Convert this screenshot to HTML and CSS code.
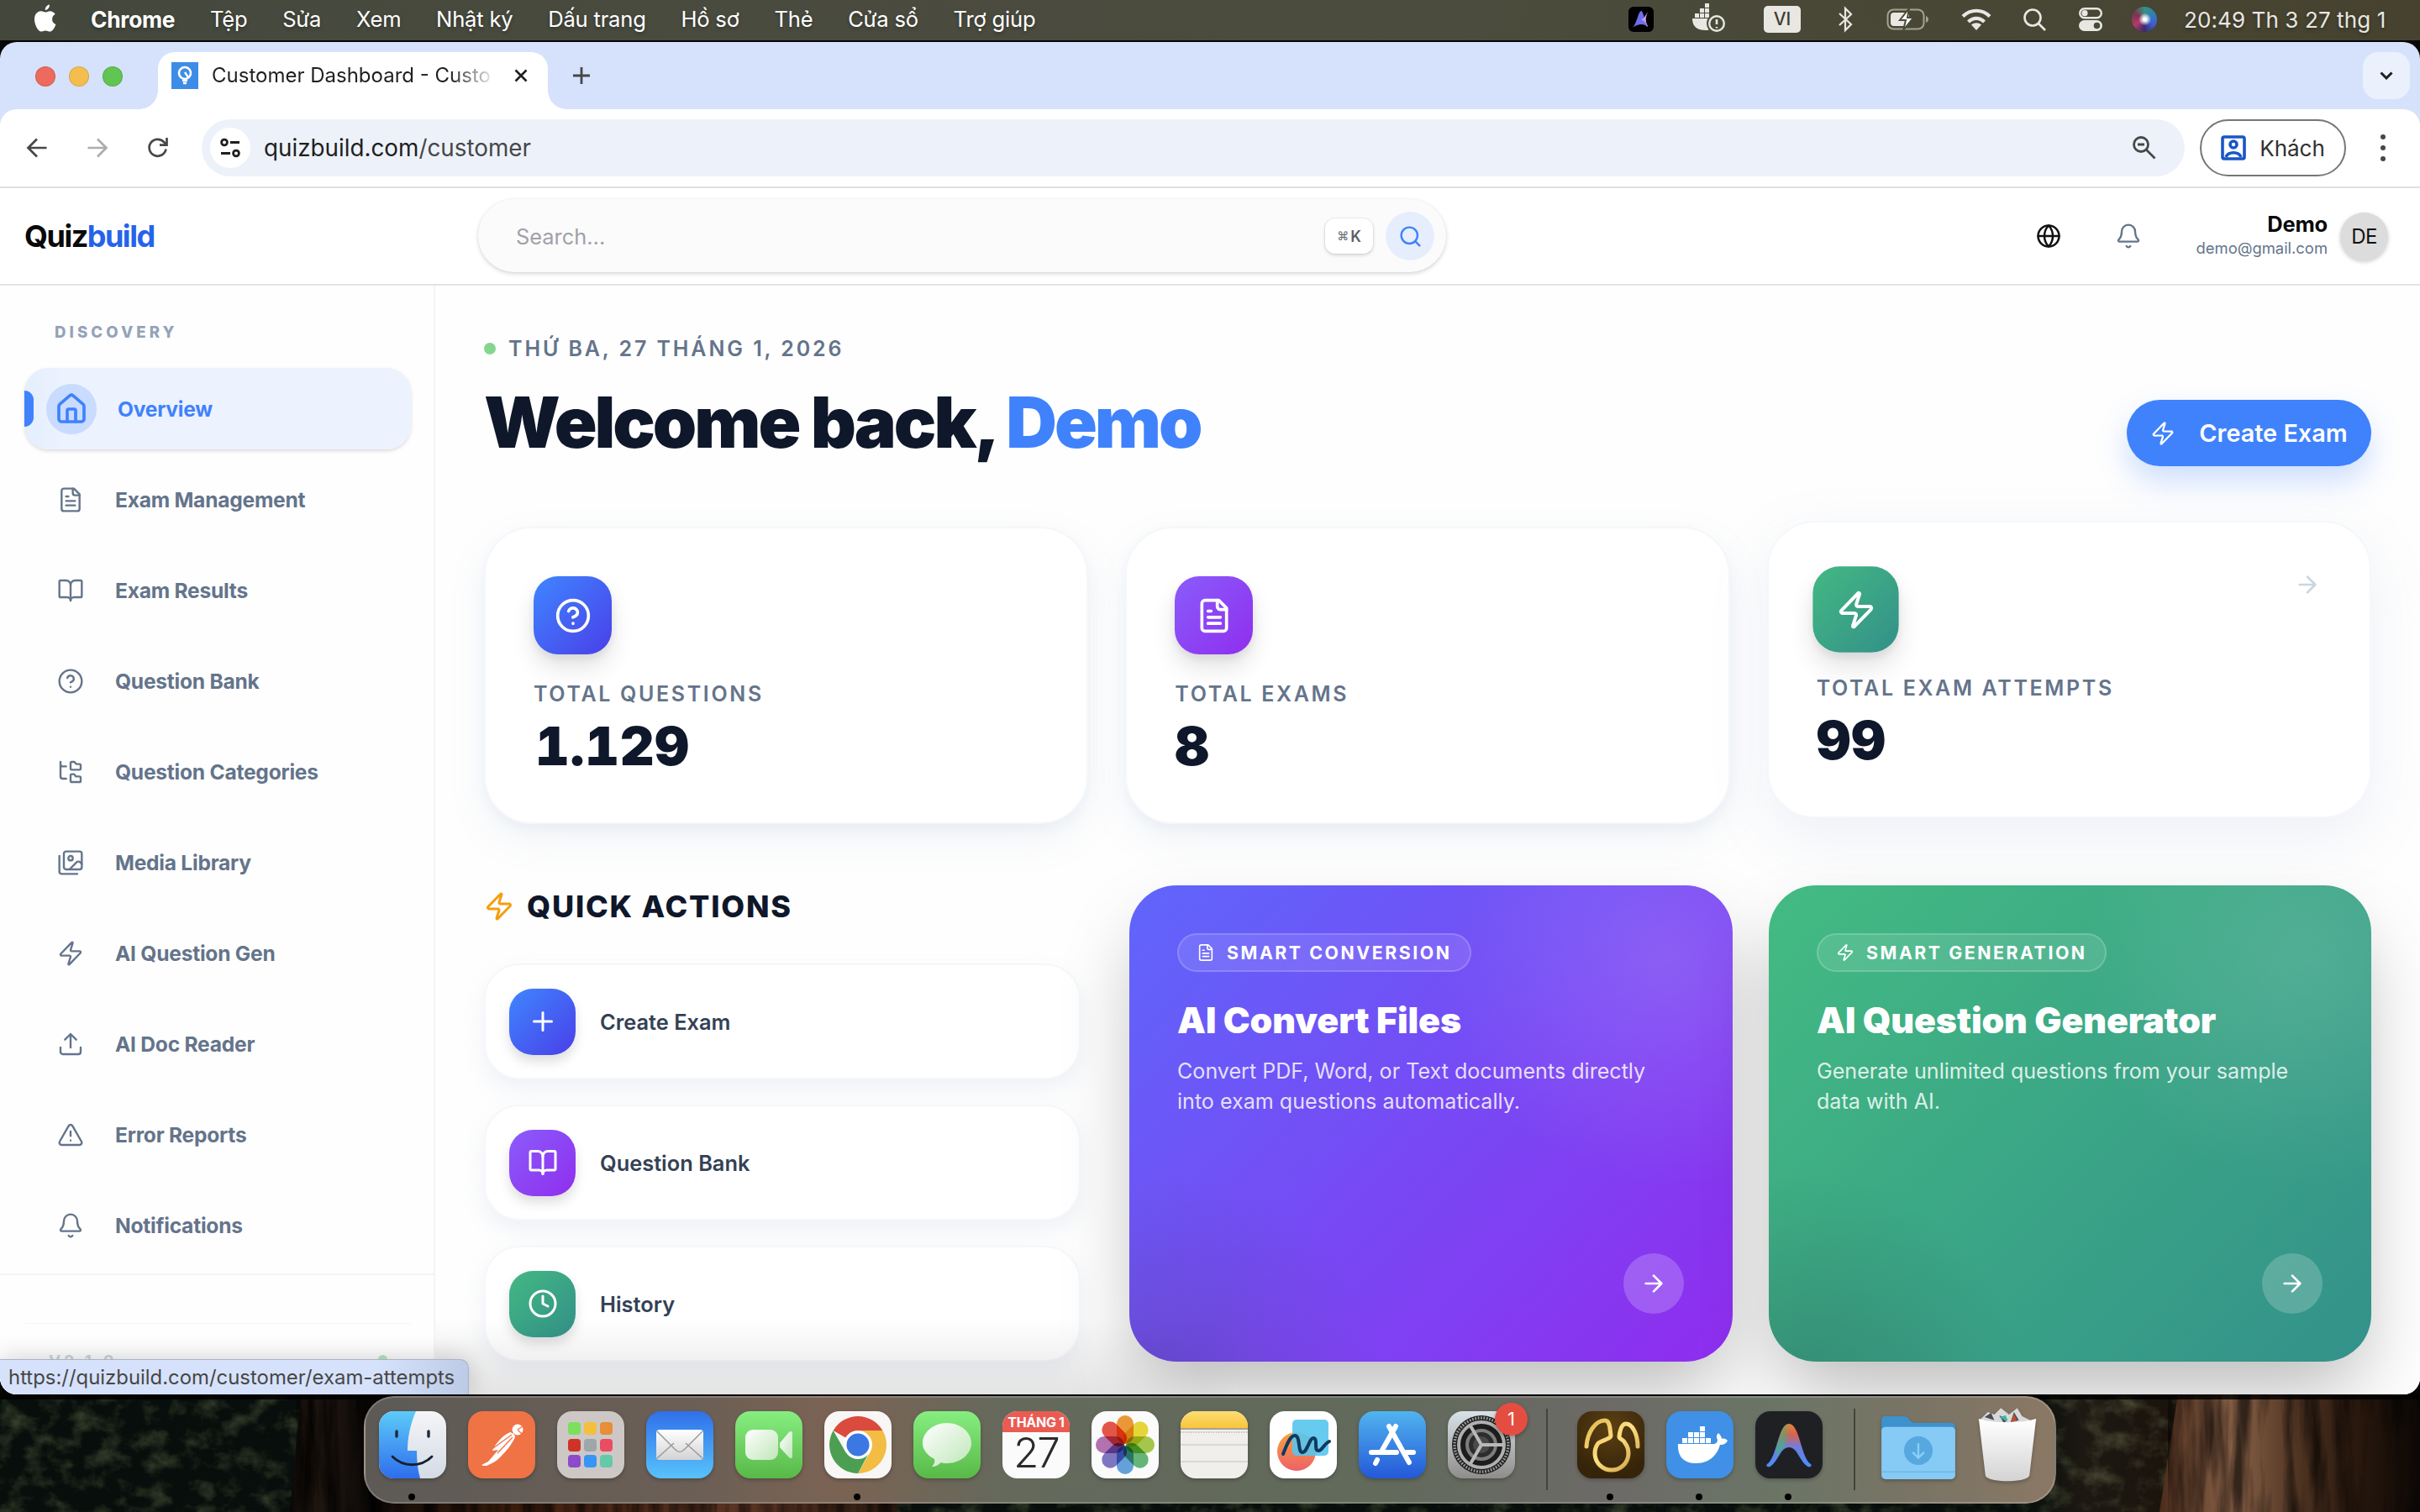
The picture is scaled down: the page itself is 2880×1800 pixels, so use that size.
FILE: index.html
```html
<!DOCTYPE html>
<html lang="vi">
<head>
<meta charset="utf-8">
<title>Customer Dashboard</title>
<link rel="stylesheet" href="styles.css">
</head>
<body>
<svg class="defs" width="0" height="0">
  <defs>
    <symbol id="house" viewBox="0 0 24 24"><path d="M15 21v-8a1 1 0 0 0-1-1h-4a1 1 0 0 0-1 1v8"/><path d="M3 10a2 2 0 0 1 .709-1.528l7-5.999a2 2 0 0 1 2.582 0l7 5.999A2 2 0 0 1 21 10v9a2 2 0 0 1-2 2H5a2 2 0 0 1-2-2z"/></symbol>
    <symbol id="file" viewBox="0 0 24 24"><path d="M15 2H6a2 2 0 0 0-2 2v16a2 2 0 0 0 2 2h12a2 2 0 0 0 2-2V7Z"/><path d="M14 2v4a2 2 0 0 0 2 2h4M10 9H8M16 13H8M16 17H8"/></symbol>
    <symbol id="book" viewBox="0 0 24 24"><path d="M12 7v14"/><path d="M3 18a1 1 0 0 1-1-1V4a1 1 0 0 1 1-1h5a4 4 0 0 1 4 4 4 4 0 0 1 4-4h5a1 1 0 0 1 1 1v13a1 1 0 0 1-1 1h-6a3 3 0 0 0-3 3 3 3 0 0 0-3-3z"/></symbol>
    <symbol id="help" viewBox="0 0 24 24"><circle cx="12" cy="12" r="10"/><path d="M9.09 9a3 3 0 0 1 5.83 1c0 2-3 3-3 3M12 17h.01"/></symbol>
    <symbol id="tree" viewBox="0 0 24 24"><path d="M20 10a1 1 0 0 0 1-1V6a1 1 0 0 0-1-1h-2.5a1 1 0 0 1-.8-.4l-.9-1.2A1 1 0 0 0 15 3h-2a1 1 0 0 0-1 1v5a1 1 0 0 0 1 1Z"/><path d="M20 21a1 1 0 0 0 1-1v-3a1 1 0 0 0-1-1h-2.9a1 1 0 0 1-.88-.55l-.42-.85a1 1 0 0 0-.92-.6H13a1 1 0 0 0-1 1v5a1 1 0 0 0 1 1Z"/><path d="M3 5a2 2 0 0 0 2 2h3M3 3v13a2 2 0 0 0 2 2h3"/></symbol>
    <symbol id="images" viewBox="0 0 24 24"><path d="M18 22H4a2 2 0 0 1-2-2V6"/><path d="m22 13-1.296-1.296a2.41 2.41 0 0 0-3.408 0L11 18"/><circle cx="12" cy="8" r="2"/><rect width="16" height="16" x="6" y="2" rx="2"/></symbol>
    <symbol id="zap" viewBox="0 0 24 24"><path d="M4 14a1 1 0 0 1-.78-1.63l9.9-10.2a.5.5 0 0 1 .86.46l-1.92 6.02A1 1 0 0 0 13 10h7a1 1 0 0 1 .78 1.63l-9.9 10.2a.5.5 0 0 1-.86-.46l1.92-6.02A1 1 0 0 0 11 14z"/></symbol>
    <symbol id="upload" viewBox="0 0 24 24"><path d="M12 3v12M17 8l-5-5-5 5M21 15v4a2 2 0 0 1-2 2H5a2 2 0 0 1-2-2v-4"/></symbol>
    <symbol id="alert" viewBox="0 0 24 24"><path d="m21.73 18-8-14a2 2 0 0 0-3.48 0l-8 14A2 2 0 0 0 4 21h16a2 2 0 0 0 1.73-3"/><path d="M12 9v4M12 17h.01"/></symbol>
    <symbol id="bell" viewBox="0 0 24 24"><path d="M10.268 21a2 2 0 0 0 3.464 0"/><path d="M3.262 15.326A1 1 0 0 0 4 17h16a1 1 0 0 0 .74-1.673C19.41 13.956 18 12.499 18 8A6 6 0 0 0 6 8c0 4.499-1.411 5.956-2.738 7.326"/></symbol>
    <symbol id="search" viewBox="0 0 24 24"><path d="m21 21-4.34-4.34"/><circle cx="11" cy="11" r="8"/></symbol>
    <symbol id="globe" viewBox="0 0 24 24"><circle cx="12" cy="12" r="10"/><path d="M12 2a14.5 14.5 0 0 0 0 20 14.5 14.5 0 0 0 0-20M2 12h20"/></symbol>
    <symbol id="arrow" viewBox="0 0 24 24"><path d="M5 12h14M12 5l7 7-7 7"/></symbol>
    <symbol id="plus" viewBox="0 0 24 24"><path d="M5 12h14M12 5v14"/></symbol>
    <symbol id="clock" viewBox="0 0 24 24"><circle cx="12" cy="12" r="10"/><path d="M12 6v6l4 2"/></symbol>
    <linearGradient id="g-silver" x1="0" y1="0" x2="0" y2="1"><stop offset="0" stop-color="#fff"/><stop offset="1" stop-color="#d3d3d3"/></linearGradient>
    <linearGradient id="g-green" x1="0" y1="0" x2="0" y2="1"><stop offset="0" stop-color="#86ee80"/><stop offset="1" stop-color="#58b948"/></linearGradient>
    <linearGradient id="g-mint" x1="0" y1="0" x2="1" y2="1"><stop offset="0" stop-color="#fff"/><stop offset="1" stop-color="#bfe6b8"/></linearGradient>
    <linearGradient id="g-finder" x1="0" y1="0" x2="0" y2="1"><stop offset="0" stop-color="#5ccbf8"/><stop offset="1" stop-color="#2f6ded"/></linearGradient>
    <linearGradient id="g-face" x1="0" y1="0" x2="0" y2="1"><stop offset="0" stop-color="#f5f5f7"/><stop offset="1" stop-color="#d3dbe6"/></linearGradient>
    <linearGradient id="g-mail" x1="0" y1="0" x2="0" y2="1"><stop offset="0" stop-color="#3070ea"/><stop offset="1" stop-color="#58c3fa"/></linearGradient>
    <linearGradient id="g-store" x1="0" y1="0" x2="0" y2="1"><stop offset="0" stop-color="#51b4ef"/><stop offset="1" stop-color="#2458d8"/></linearGradient>
    <linearGradient id="g-gear" x1="0" y1="0" x2="0" y2="1"><stop offset="0" stop-color="#d9e2e8"/><stop offset="1" stop-color="#8f8d8b"/></linearGradient>
    <linearGradient id="g-gold" x1="0" y1="0" x2="1" y2="1"><stop offset="0" stop-color="#e0b64c"/><stop offset=".5" stop-color="#ffe182"/><stop offset="1" stop-color="#c99a3e"/></linearGradient>
    <radialGradient id="g-navi" cx=".5" cy=".25" r=".7"><stop offset="0" stop-color="#5c4012"/><stop offset="1" stop-color="#35240a"/></radialGradient>
    <linearGradient id="g-note" x1="0" y1="0" x2="0" y2="1"><stop offset="0" stop-color="#fbdd73"/><stop offset="1" stop-color="#f9c53b"/></linearGradient>
    <linearGradient id="g-arc" x1="0" y1="0" x2="0" y2="1"><stop offset="0" stop-color="#e8833a"/><stop offset=".25" stop-color="#d9614f"/><stop offset=".55" stop-color="#6d7fe0"/><stop offset="1" stop-color="#4a8df8"/></linearGradient>
    <linearGradient id="g-arc2" x1="0" y1="0" x2="1" y2="0"><stop offset=".3" stop-color="#3fb57a"/><stop offset=".8" stop-color="#3fb57a" stop-opacity="0"/></linearGradient>
    <linearGradient id="g-free" x1="0" y1="0" x2="0" y2="1"><stop offset="0" stop-color="#f6a441"/><stop offset="1" stop-color="#ee6168"/></linearGradient>
    <clipPath id="tile"><rect width="80" height="80" rx="18"/></clipPath>
    <filter id="bark" x="0" y="0" width="100%" height="100%"><feTurbulence type="fractalNoise" baseFrequency=".05 .006" numOctaves="4" seed="7"/><feColorMatrix values="0 0 0 0 0  0 0 0 0 0  0 0 0 0 0  2.6 0 0 0 -.95"/></filter>
    <filter id="leaf" x="0" y="0" width="100%" height="100%"><feTurbulence type="fractalNoise" baseFrequency=".035 .045" numOctaves="5" seed="3"/><feColorMatrix values="0 0 0 0 .3  0 0 0 0 .36  0 0 0 0 .16  2 0 0 0 -.9"/></filter>
    <linearGradient id="trunk-l" x1="0" x2="1"><stop offset="0" stop-color="#060504"/><stop offset=".2" stop-color="#2a1d14"/><stop offset=".5" stop-color="#1c1410"/><stop offset="1" stop-color="#090706"/></linearGradient>
    <linearGradient id="trunk-m" x1="0" x2="1"><stop offset="0" stop-color="#130c07"/><stop offset=".3" stop-color="#42200f"/><stop offset=".7" stop-color="#5a3424"/><stop offset="1" stop-color="#2b1a10"/></linearGradient>
    <linearGradient id="trunk-r" x1="0" x2="1"><stop offset="0" stop-color="#4c2d1c"/><stop offset=".28" stop-color="#8a6248"/><stop offset=".55" stop-color="#4b3120"/><stop offset=".75" stop-color="#2a190e"/><stop offset="1" stop-color="#0c0805"/></linearGradient>
    <linearGradient id="floor" x1="0" x2="1"><stop offset="0" stop-color="#1a1712" stop-opacity="0"/><stop offset=".4" stop-color="#1d1812"/><stop offset="1" stop-color="#1a130c"/></linearGradient>
  </defs>
</svg>

<div class="desktop">
  <svg class="wallpaper" viewBox="0 0 2880 140" preserveAspectRatio="none">
    <rect width="2880" height="140" fill="#070e0b"/>
    <rect x="2400" width="200" height="140" fill="url(#floor)"/>
    <rect width="2880" height="140" filter="url(#leaf)" opacity=".38"/>
    <path d="M358 0h90v140H345z" fill="url(#trunk-l)"/>
    <path d="M448 0h620v140H448z" fill="url(#trunk-m)"/>
    <path d="M2592 0h288v140h-310z" fill="url(#trunk-r)"/>
    <rect x="352" width="716" height="140" filter="url(#bark)" opacity=".8"/>
    <rect x="2580" width="300" height="140" filter="url(#bark)" opacity=".6"/>
    <rect width="2880" height="6" fill="#000" opacity=".8"/>
  </svg>

  <header class="menubar">
    <svg class="apple" viewBox="0 0 28 34"><path fill="#fff" d="M19.4 8.2c-2.200 0-3.700 1.400-5.200 1.400-1.600 0-3.200-1.300-5.200-1.300C4.900 8.300 1 11.600 1 18c0 6.700 4.400 14.600 8 14.600 1.800 0 2.800-1.200 5.200-1.200 2.300 0 3 1.200 5.100 1.200 3 0 5.900-4.700 7.100-8.600-3-1.200-4.300-3.400-4.300-6.100 0-2.700 1.300-4.700 3.600-6.100-1.600-2.300-4-3.600-6.300-3.600zM18.900.4c-3 .5-5.400 3.300-5.100 6.500 2.900.1 5.400-3.100 5.100-6.500z"/></svg>
    <nav class="menus"><b>Chrome</b><span>Tệp</span><span>Sửa</span><span>Xem</span><span>Nhật ký</span><span>Dấu trang</span><span>Hồ sơ</span><span>Thẻ</span><span>Cửa sổ</span><span>Trợ giúp</span></nav>
    <div class="status">
      <svg class="s-a" viewBox="0 0 30 30"><rect width="30" height="30" rx="6" fill="#000"/><path d="M5 25C10 20 12 5 15 5c3 0 4 13 8 19-4-3-10-5-18 1z" fill="#6c6fe8"/><path d="M23 6c-3 5-5 9-9 10 4-1 7 3 8 8l1-1c-3-6-3-9 0-17z" fill="#c99bf0"/></svg>
      <svg class="s-docker" viewBox="0 0 40 34"><g fill="#e8e7e2"><path d="M0 16h26c4 0 5-2 6-3l2 4c-3 9-10 13-18 13C6 30 0 26 0 16z"/><path d="M3 9h5v5H3zM9 9h5v5H9zM15 9h5v5h-5zM9 3h5v5H9zM15 3h5v5h-5zM15-3h5v5h-5z" transform="translate(0 1)"/></g><circle cx="29" cy="22" r="11" fill="#e8e7e2" stroke="#494b3a" stroke-width="2"/><circle cx="29" cy="22" r="7.600" fill="#494b3a"/><path d="M29 17v6M29 26v1.500" stroke="#e8e7e2" stroke-width="2.600"/></svg>
      <span class="s-vi">VI</span>
      <svg class="s-bt" viewBox="0 0 21 32"><path d="M3 9l14 13-7 7V3l7 7L3 23" fill="none" stroke="#e8e7e2" stroke-width="2.200"/></svg>
      <svg class="s-bat" viewBox="0 0 51 26"><rect x="1.500" y="1.500" width="43" height="23" rx="7" fill="none" stroke="#a3a294" stroke-width="2"/><rect x="5" y="5" width="22" height="16" rx="4" fill="#e8e7e2"/><path d="M47 9c4 2 4 6 0 8z" fill="#a3a294"/><path d="M27 0L16 14h7l-3 12 12-15h-7z" fill="#fff" stroke="#494b3a" stroke-width="2"/></svg>
      <svg class="s-wifi" viewBox="0 0 36 26"><g fill="none" stroke="#e8e7e2" stroke-width="4.200"><path d="M2 9.500c9-9 23-9 32 0M8.500 16c5.500-5.500 13.500-5.500 19 0"/></g><path d="M12 19.500c3.500-3 8.500-3 12 0L18 26z" fill="#e8e7e2"/></svg>
      <svg class="s-find" viewBox="0 0 27 27"><g fill="none" stroke="#e8e7e2" stroke-width="2.600"><circle cx="11" cy="11" r="9.500"/><path d="M18 18l8 8"/></g></svg>
      <svg class="s-cc" viewBox="0 0 28 28"><rect x="1.200" y="1.200" width="25.600" height="11" rx="5.500" fill="none" stroke="#e8e7e2" stroke-width="2.400"/><circle cx="7" cy="6.700" r="3.600" fill="#e8e7e2"/><rect y="15" width="28" height="13" rx="6.500" fill="#e8e7e2"/><circle cx="21.500" cy="21.500" r="3.800" fill="#494b3a"/></svg>
      <span class="s-siri"></span>
      <span class="s-time">20:49 Th 3 27 thg 1</span>
    </div>
  </header>

  <div class="window">
    <div class="tabstrip">
      <div class="lights"><i class="red"></i><i class="amber"></i><i class="green"></i></div>
      <div class="tab">
        <svg class="favicon" viewBox="0 0 32 32"><rect width="32" height="32" fill="#3d8de6"/><circle cx="16" cy="13" r="7" fill="none" stroke="#fff" stroke-width="2.600"/><path d="M16 12l4 6M13 22h6M14 25h4" stroke="#fff" stroke-width="2.400" fill="none"/></svg>
        <span class="tab-title">Customer Dashboard - Custo</span>
        <svg class="tab-x" viewBox="0 0 16 16"><path d="M1.500 1.500l13 13M14.500 1.500l-13 13" stroke="#1f1f1f" stroke-width="2.600"/></svg>
      </div>
      <svg class="tab-new" viewBox="0 0 20 20"><path d="M10 0v20M0 10h20" stroke="#444746" stroke-width="2.800"/></svg>
      <span class="tab-menu"><svg viewBox="0 0 16 10"><path d="M1.500 1.500L8 8l6.500-6.500" fill="none" stroke="#1f1f1f" stroke-width="3"/></svg></span>
    </div>
    <div class="toolbar">
      <svg class="tb-icon" viewBox="0 0 24 24"><path d="M23.500 12H2M12 1.500L1.500 12 12 22.500" stroke="#474747"/></svg>
      <svg class="tb-icon" viewBox="0 0 24 24"><path d="M.5 12H22M12 1.500L22.500 12 12 22.500" stroke="#adadad"/></svg>
      <svg class="tb-icon" viewBox="0 0 24 24"><path d="M21.500 13.500A10 10 0 1 1 19 5l2.500 3M22.500 0v8.700h-8.500" stroke="#474747"/></svg>
      <div class="omnibox">
        <span class="site"><svg viewBox="0 0 24 24"><g fill="none" stroke="#1f1f1f" stroke-width="2.800"><circle cx="5" cy="5.500" r="3.400"/><path d="M12 5.500h11M1 18.500h11"/><circle cx="19" cy="18.500" r="3.400"/></g></svg></span>
        <span class="url">quizbuild.com<em>/customer</em></span>
        <svg class="zoom" viewBox="0 0 28 28"><g fill="none" stroke="#474747" stroke-width="2.800"><circle cx="10" cy="10" r="8.500"/><path d="M16.500 16.500l10 10M6 10h8"/></g></svg>
      </div>
      <div class="guest"><svg viewBox="0 0 30 30"><g fill="none" stroke="#1a56c8" stroke-width="3.600"><rect x="2" y="2" width="26" height="26" rx="2"/><circle cx="15" cy="11" r="4"/><path d="M6 26c3-7 15-7 18 0"/></g></svg><span>Khách</span></div>
      <div class="dots"><i></i><i></i><i></i></div>
    </div>

    <div class="topbar">
      <div class="logo">Quiz<span>build</span></div>
      <div class="searchbox"><span class="hint">Search...</span><kbd><small>⌘</small>K</kbd><span class="go"><svg class="ic"><use href="#search"/></svg></span></div>
      <svg class="ic globe"><use href="#globe"/></svg>
      <svg class="ic bell"><use href="#bell"/></svg>
      <div class="user"><b>Demo</b><span>demo@gmail.com</span></div>
      <div class="avatar">DE</div>
    </div>

    <div class="body">
      <aside class="sidebar">
        <div class="side-title">DISCOVERY</div>
        <nav>
          <a class="active"><span class="ibox"><svg class="ic"><use href="#house"/></svg></span>Overview</a>
          <a><svg class="ic"><use href="#file"/></svg>Exam Management</a>
          <a><svg class="ic"><use href="#book"/></svg>Exam Results</a>
          <a><svg class="ic"><use href="#help"/></svg>Question Bank</a>
          <a><svg class="ic"><use href="#tree"/></svg>Question Categories</a>
          <a><svg class="ic"><use href="#images"/></svg>Media Library</a>
          <a><svg class="ic"><use href="#zap"/></svg>AI Question Gen</a>
          <a><svg class="ic"><use href="#upload"/></svg>AI Doc Reader</a>
          <a><svg class="ic"><use href="#alert"/></svg>Error Reports</a>
          <a><svg class="ic"><use href="#bell"/></svg>Notifications</a>
        </nav>
        <div class="side-foot"><div class="version"><span>V2.1.0</span><i></i></div></div>
      </aside>

      <main>
        <section class="hero">
          <div>
            <div class="date"><i></i>THỨ BA, 27 THÁNG 1, 2026</div>
            <h1>Welcome back, <span>Demo</span></h1>
          </div>
          <button class="create"><svg class="ic"><use href="#zap"/></svg>Create Exam</button>
        </section>

        <section class="stats">
          <article class="stat"><span class="tile blue"><svg class="ic"><use href="#help"/></svg></span><h3>TOTAL QUESTIONS</h3><strong class="wide">1.129</strong></article>
          <article class="stat"><span class="tile violet"><svg class="ic"><use href="#file"/></svg></span><h3>TOTAL EXAMS</h3><strong>8</strong></article>
          <article class="stat hovered"><svg class="ic more"><use href="#arrow"/></svg><span class="tile teal"><svg class="ic"><use href="#zap"/></svg></span><h3>TOTAL EXAM ATTEMPTS</h3><strong>99</strong></article>
        </section>

        <section class="lower">
          <div class="quick">
            <h2><svg class="ic"><use href="#zap"/></svg>QUICK ACTIONS</h2>
            <a><span class="tile blue"><svg class="ic"><use href="#plus"/></svg></span>Create Exam</a>
            <a><span class="tile violet"><svg class="ic"><use href="#book"/></svg></span>Question Bank</a>
            <a><span class="tile teal"><svg class="ic"><use href="#clock"/></svg></span>History</a>
          </div>
          <div class="promos">
            <article class="promo convert">
              <span class="badge"><svg class="ic"><use href="#file"/></svg>SMART CONVERSION</span>
              <h3>AI Convert Files</h3>
              <p>Convert PDF, Word, or Text documents directly<br>into exam questions automatically.</p>
              <span class="next"><svg class="ic"><use href="#arrow"/></svg></span>
            </article>
            <article class="promo generate">
              <span class="badge"><svg class="ic"><use href="#zap"/></svg>SMART GENERATION</span>
              <h3>AI Question Generator</h3>
              <p>Generate unlimited questions from your sample<br>data with AI.</p>
              <span class="next"><svg class="ic"><use href="#arrow"/></svg></span>
            </article>
          </div>
        </section>
      </main>
    </div>
    <div class="linkhint">https://quizbuild.com/customer/exam-attempts</div>
  </div>

  <footer class="dock">
    <div class="app on"><svg viewBox="0 0 80 80"><g clip-path="url(#tile)"><rect width="80" height="80" fill="url(#g-face)"/><path d="M0 0h44c-7 16-10 32-10 47h11c0 12 1 22 4 33H0z" fill="url(#g-finder)"/></g><path d="M21 24v6M59 24v6" stroke="#1b2a3a" stroke-width="3.400" stroke-linecap="round"/><path d="M16 54c13 13 34 13 47 0" fill="none" stroke="#16202c" stroke-width="2.800" stroke-linecap="round"/></svg></div>
    <div class="app"><svg viewBox="0 0 80 80"><rect width="80" height="80" rx="18" fill="#ef7345"/><g fill="#fff"><circle cx="59" cy="22" r="6.500"/><path d="M50 25c4 1 6 3 6 6-4 9-11 17-19 25-4 4-9 6-15 9-3 0-5 0-6-1l8-4 12-14-7 1c4-9 12-18 21-22z"/></g><path d="M30 44L52 28M35 50l18-19M59 22l6-4M59 22l5 5" stroke="#ef7345" stroke-width="1.300"/></svg></div>
    <div class="app"><svg viewBox="0 0 80 80"><rect width="80" height="80" rx="18" fill="#cdc8c6"/><rect x="13" y="13" width="15" height="15" rx="4" fill="#7ce05c"/><rect x="32" y="13" width="15" height="15" rx="4" fill="#f4bf3c"/><rect x="51" y="13" width="15" height="15" rx="4" fill="#e88d38"/><rect x="13" y="33" width="15" height="15" rx="4" fill="#cf3327"/><rect x="32" y="33" width="15" height="15" rx="4" fill="#9da6a9"/><rect x="51" y="33" width="15" height="15" rx="4" fill="#ea4c62"/><rect x="13" y="52" width="15" height="15" rx="4" fill="#8e4bc9"/><rect x="32" y="52" width="15" height="15" rx="4" fill="#3795f7"/><rect x="51" y="52" width="15" height="15" rx="4" fill="#64c9a8"/></svg></div>
    <div class="app"><svg viewBox="0 0 80 80"><rect width="80" height="80" rx="18" fill="url(#g-mail)"/><rect x="12" y="22" width="56" height="36" rx="4" fill="url(#g-silver)"/><path d="M13 56l20-18M67 56L47 38M13 24l22 22c3 3 7 3 10 0l22-22" fill="none" stroke="#9a9a9a" stroke-width="1.500"/></svg></div>
    <div class="app"><svg viewBox="0 0 80 80"><rect width="80" height="80" rx="18" fill="url(#g-green)"/><rect x="12" y="22" width="39" height="36" rx="9" fill="url(#g-mint)"/><path d="M53 38l11-13c2-2 4-1 4 1v28c0 2-2 3-4 1L53 43z" fill="url(#g-mint)"/></svg></div>
    <div class="app on"><svg viewBox="0 0 80 80"><rect width="80" height="80" rx="18" fill="#f8f7f6"/><path d="M40 40L10.600 23A34 34 0 0 1 69.400 23z" fill="#da4b3d"/><path d="M40 23h29.400A34 34 0 0 1 40 74l14.700-25.500z" fill="#f3bc42"/><path d="M10.600 23l14.700 25.500L54 48 40 74A34 34 0 0 1 10.600 23z" fill="#4c9f52"/><circle cx="40" cy="40" r="17" fill="#fff"/><circle cx="40" cy="40" r="13.500" fill="#3c78e2"/></svg></div>
    <div class="app"><svg viewBox="0 0 80 80"><rect width="80" height="80" rx="18" fill="url(#g-green)"/><path d="M40 14c16 0 29 11 29 24S56 62 40 62c-3 0-5 0-7-1-3 3-7 5-11 5 3-3 4-6 3-9C17 53 11 46 11 38c0-13 13-24 29-24z" fill="url(#g-mint)"/></svg></div>
    <div class="app cal"><span>THÁNG 1</span><b>27</b></div>
    <div class="app"><svg viewBox="0 0 80 80"><rect width="80" height="80" rx="18" fill="#fbfbfb"/><g transform="translate(40 40)" class="petals"><rect x="-10" y="-35" width="20" height="34" rx="10" fill="#f09a38"/><rect x="-10" y="-35" width="20" height="34" rx="10" fill="#e9d93c" transform="rotate(45)"/><rect x="-10" y="-35" width="20" height="34" rx="10" fill="#a7ca4c" transform="rotate(90)"/><rect x="-10" y="-35" width="20" height="34" rx="10" fill="#68b779" transform="rotate(135)"/><rect x="-10" y="-35" width="20" height="34" rx="10" fill="#67a4dd" transform="rotate(180)"/><rect x="-10" y="-35" width="20" height="34" rx="10" fill="#7f79c4" transform="rotate(225)"/><rect x="-10" y="-35" width="20" height="34" rx="10" fill="#b574b3" transform="rotate(270)"/><rect x="-10" y="-35" width="20" height="34" rx="10" fill="#e8564a" transform="rotate(315)"/></g></svg></div>
    <div class="app"><svg viewBox="0 0 80 80"><g clip-path="url(#tile)"><rect width="80" height="80" fill="#f1efec"/><rect width="80" height="20" fill="url(#g-note)"/><path d="M0 21h80" stroke="#a9a294" stroke-width="2"/><path d="M0 25h80" stroke="#b9b5ae" stroke-width="1.500" stroke-dasharray="1.500 1.500"/><path d="M0 40h80M0 60h80" stroke="#d3d0cd" stroke-width="1.600"/></g></svg></div>
    <div class="app"><svg viewBox="0 0 80 80"><rect width="80" height="80" rx="18" fill="#fff"/><circle cx="32" cy="48" r="23" fill="url(#g-free)"/><rect x="27" y="10" width="43" height="43" rx="5" fill="#56c5ee" opacity=".9"/><path d="M16 51c4-10 8-22 14-22 7 0 3 20 9 20 6 0 8-17 13-17 6 0 0 15 6 15 5 0 6-8 13-11" fill="none" stroke="#0f3a5f" stroke-width="4" stroke-linecap="round"/></svg></div>
    <div class="app"><svg viewBox="0 0 80 80"><rect width="80" height="80" rx="18" fill="url(#g-store)"/><g stroke="#fff" stroke-width="6" stroke-linecap="round"><path d="M44 18L27 48M36 18l24 43M15 49h30M57 49h8M22 58l-2 4"/></g></svg></div>
    <div class="app"><svg viewBox="0 0 80 80"><rect width="80" height="80" rx="18" fill="url(#g-gear)"/><circle cx="40" cy="40" r="35" fill="#1d1d1d"/><circle cx="40" cy="40" r="32" fill="none" stroke="#9a9a9a" stroke-width="3.500" stroke-dasharray="1.800 1.600"/><circle cx="40" cy="40" r="27" fill="none" stroke="#b0b0b0" stroke-width="4"/><circle cx="40" cy="40" r="18" fill="#2c2c2c"/><circle cx="40" cy="40" r="17" fill="none" stroke="#7d7d7d" stroke-width="4"/><circle cx="40" cy="40" r="10" fill="#4a4a4a"/><path d="M40 40h26M40 40L27 17.500M40 40L27 62.500" stroke="#b8b8b8" stroke-width="4"/></svg><span class="count">1</span></div>
    <span class="sep"></span>
    <div class="app on"><svg viewBox="0 0 80 80"><rect width="80" height="80" rx="18" fill="url(#g-navi)"/><g fill="none" stroke="url(#g-gold)" stroke-width="5" stroke-linecap="round"><path d="M11 42C12 26 21 11 33 11c6 0 6 10 7 18 0 4-9 5-15 9a20 20 0 1 0 32 0c-2-5-7-4-7-8 1-8 3-15 8-15 8 0 14 13 14 27"/></g></svg></div>
    <div class="app on"><svg viewBox="0 0 80 80"><rect width="80" height="80" rx="18" fill="#3f90e6"/><g fill="#fff"><path d="M14 39h42c3 0 5-2 5-5-2-3-1-6 1-8 3 3 4 5 4 7 3-1 5 0 7 2-2 4-5 5-9 5-4 14-14 22-29 22-14 0-22-8-21-23z"/><path d="M19 32h6v6h-6zM26 32h6v6h-6zM33 32h6v6h-6zM40 32h6v6h-6zM47 32h6v6h-6zM26 25h6v6h-6zM33 25h6v6h-6zM40 25h6v6h-6zM40 18h6v6h-6z"/></g></svg></div>
    <div class="app on"><svg viewBox="0 0 80 80"><rect width="80" height="80" rx="18" fill="#1f2024"/><path d="M14 63C26 55 27 15 40 15s14 40 26 48c2 2-1 5-5 2C52 58 50 43 40 43S28 58 19 65c-4 3-7 0-5-2z" fill="url(#g-arc)"/><path d="M24 48C29 33 31 15 40 15c3 0 5 2 7 6L34 44c-4 2-6 5-8 9z" fill="url(#g-arc2)" opacity=".7"/></svg></div>
    <span class="sep second"></span>
    <div class="app folder"><svg viewBox="0 0 90 80"><path d="M0 8c0-4 2-6 5-6h22c7 0 7 8 13 8h45c3 0 5 2 5 5v20H0z" fill="#3d92ce"/><rect y="15" width="90" height="64" rx="5" fill="#86cbf5"/><path d="M0 70h90" stroke="#6ab8e8" stroke-width="1.500"/><circle cx="45" cy="44" r="17.500" fill="#58a8e0"/><path d="M45 35v17M38 46l7 7 7-7" fill="none" stroke="#8bd0f8" stroke-width="2.400"/></svg></div>
    <div class="app trash"><svg viewBox="0 0 72 92"><path d="M2 16l10-10 8 3 8-8 10 8 10-8 6 10 12 6v6H4z" fill="#d9d9d9"/><path d="M8 12l8-5 4 9zM26 10l10 4-4 6zM44 6l6 10-10 2z" fill="#4a4d52"/><path d="M26 12l8-2 2 8z" fill="#35b6a5"/><path d="M44 8l4 9-8 1z" fill="#b5523a"/><path d="M1 15c18 6 52 6 70 0l-8 68c-1 10-53 10-54 0z" fill="url(#g-silver)"/><path d="M1 15c18 6 52 6 70 0" fill="none" stroke="#fff" stroke-width="2"/></svg></div>
  </footer>
</div>
</body>
</html>
```

FILE: styles.css
```css
* { box-sizing: border-box; margin: 0; padding: 0; }
body { width: 2880px; height: 1800px; overflow: hidden; background: #050505; font-family: Inter, "Noto Sans", sans-serif; }
.defs { position: absolute; }
svg { display: block; flex: none; }
i { display: block; flex: none; }
.ic { fill: none; stroke: currentColor; stroke-width: 1.8; stroke-linecap: round; stroke-linejoin: round; width: 32px; height: 32px; }

.desktop { position: relative; width: 2880px; height: 1800px; display: flex; flex-direction: column; gap: 2px; }
.wallpaper { position: absolute; left: 0; bottom: 0; width: 2880px; height: 140px; }

/* macOS menu bar */
.menubar { height: 48px; display: flex; align-items: center; padding: 0 40px 2px; color: #fff; font-size: 25.6px; background: linear-gradient(90deg, #44483c, #4a4b3f 30%, #4b4c3d 60%, #46422f); text-shadow: 0 2px 4px rgba(0,0,0,.35); }
.apple { width: 28px; height: 34px; margin: -3px 40px 0 0; }
.menus { display: flex; gap: 41.700px; letter-spacing: -.2px; white-space: nowrap; }
.menus b { font-weight: 700; font-size: 26.4px; letter-spacing: -.3px; }
.status { margin-left: auto; display: flex; align-items: center; color: #e8e7e2; }
.s-a { width: 30px; height: 30px; }
.s-docker { width: 40px; height: 34px; margin-left: 46px; overflow: visible; }
.s-vi { width: 44px; height: 32px; margin-left: 45px; border-radius: 5px; background: #e8e7e2; color: #3c3d30; font-size: 21px; font-weight: 500; line-height: 32px; text-align: center; text-shadow: none; }
.s-bt { width: 21px; height: 32px; margin-left: 43px; }
.s-bat { width: 51px; height: 26px; margin-left: 38px; }
.s-wifi { width: 36px; height: 26px; margin-left: 38px; }
.s-find { width: 27px; height: 27px; margin-left: 38px; }
.s-cc { width: 28px; height: 28px; margin-left: 39px; }
.s-siri { width: 30px; height: 30px; margin-left: 35px; border-radius: 50%; background: radial-gradient(circle at 52% 50%, #fff 8%, rgba(255,255,255,0) 35%), conic-gradient(#3b8f83, #2f7fb5, #3f5fd0, #3a2b6c, #b23a6b, #7b3350, #3b8f83); }
.s-time { width: 241px; margin-left: 32px; white-space: nowrap; font-size: 26px; letter-spacing: .1px; }

/* browser window */
.window { position: relative; height: 1610px; display: flex; flex-direction: column; border-radius: 20px; overflow: hidden; background: #d6e2fb; }
.tabstrip { height: 80px; display: flex; padding: 12px 12px 0 42px; }
.lights { display: flex; gap: 16px; padding-top: 17px; width: 146px; }
.lights i { width: 24px; height: 24px; border-radius: 50%; border: 1px solid rgba(0,0,0,.12); }
.red { background: #ed6a5e; } .amber { background: #f4be4f; } .green { background: #61c554; }
.tab { position: relative; width: 464px; height: 68px; display: flex; align-items: center; padding: 0 24px 13px 16px; border-radius: 20px 20px 0 0; background: #fff; }
.tab::before, .tab::after { content: ""; position: absolute; bottom: 0; width: 22px; height: 22px; }
.tab::before { left: -22px; background: radial-gradient(circle at 0 0, transparent 21.500px, #fff 22px); }
.tab::after { right: -22px; background: radial-gradient(circle at 100% 0, transparent 21.500px, #fff 22px); }
.favicon { width: 32px; height: 32px; }
.tab-title { width: 338px; margin-left: 16px; white-space: nowrap; font-size: 24px; color: #1f1f1f; -webkit-mask-image: linear-gradient(90deg, #000 84%, transparent); mask-image: linear-gradient(90deg, #000 84%, transparent); }
.tab-x { width: 16px; height: 16px; margin-left: auto; }
.tab-new { width: 20px; height: 20px; margin: 18px 0 0 30px; }
.tab-menu { width: 56px; height: 56px; margin-left: auto; border-radius: 18px; background: #eaf1fd; display: flex; align-items: center; justify-content: center; }
.tab-menu svg { width: 16px; height: 10px; }
.toolbar { height: 94px; display: flex; align-items: center; padding: 0 39px 0 32px; background: #fff; border-radius: 20px 20px 0 0; border-bottom: 2px solid #e0e1e3; }
.tb-icon { width: 24px; height: 24px; margin-right: 48px; fill: none; stroke-width: 2.700; overflow: visible; }
.omnibox { width: 2360px; height: 68px; margin-left: -8px; border-radius: 34px; background: #edf2fa; display: flex; align-items: center; padding: 0 34px 0 10px; }
.site { width: 48px; height: 48px; border-radius: 50%; background: #fff; display: flex; align-items: center; justify-content: center; }
.site svg { width: 24px; height: 24px; }
.url { margin-left: 16px; font-size: 27.8px; color: #1f1f1f; }
.url em { font-style: normal; color: #474747; }
.zoom { width: 28px; height: 28px; margin-left: auto; }
.guest { width: 174px; height: 68px; margin-left: 18px; border: 2px solid #747775; border-radius: 34px; display: flex; align-items: center; justify-content: center; gap: 16px; font-size: 26px; color: #303030; }
.guest svg { width: 30px; height: 30px; }
.dots { display: flex; flex-direction: column; gap: 7px; margin-left: auto; padding-right: 2px; }
.dots i { width: 6px; height: 6px; border-radius: 50%; background: #474747; }

/* app header */
.topbar { height: 116px; display: flex; align-items: center; padding: 0 38px 0 29px; background: #fff; border-bottom: 2px solid #e4e4e6; }
.logo { width: 540px; font-size: 36px; font-weight: 700; letter-spacing: -1.500px; color: #09090b; }
.logo span { color: #2563eb; }
.searchbox { width: 1152px; height: 87px; margin-top: -2px; border-radius: 44px; background: #fbfbfb; display: flex; align-items: center; padding: 2px 14px 0 45px; box-shadow: 0 2px 5px rgba(0,0,0,.16), 0 0 2px rgba(0,0,0,.05); }
.hint { font-size: 25.4px; color: #a1a1aa; }
kbd { width: 57px; height: 42px; margin-left: auto; border-radius: 12px; background: #fff; box-shadow: 0 2px 4px rgba(0,0,0,.15), 0 0 0 1px #eee; display: flex; align-items: center; justify-content: center; gap: 2px; font: 600 18px Inter, sans-serif; color: #5f5f68; }
kbd small { font: 14px "DejaVu Sans", sans-serif; }
.go { width: 58px; height: 58px; margin-left: 15px; border-radius: 50%; background: #e6eefd; color: #3f82fc; display: flex; align-items: center; justify-content: center; }
.go .ic { width: 29px; height: 29px; stroke-width: 2; }
.globe { width: 30px; height: 30px; margin-left: auto; color: #111; stroke-width: 2; }
.topbar .bell { margin-left: 64px; color: #64748b; }
.user { width: 221px; margin-top: -2px; text-align: right; display: flex; flex-direction: column; align-items: flex-end; }
.user b { font-size: 25.5px; line-height: 30px; font-weight: 700; letter-spacing: -.2px; color: #09090b; }
.user span { font-size: 18.400px; line-height: 26px; color: #64748b; }
.avatar { width: 57px; height: 57px; margin-left: 15px; border-radius: 50%; background: #dcdcdd; box-shadow: 0 2px 5px rgba(0,0,0,.2); font-size: 24px; letter-spacing: -.5px; color: #111; line-height: 57px; text-align: center; }

.body { flex: 1; display: flex; background: #fff; min-height: 0; }
.sidebar { width: 518px; border-right: 2px solid #f4f4f6; background: #fefefe; display: flex; flex-direction: column; }
.side-title { padding: 45px 0 0 65px; height: 98px; font-size: 18.600px; line-height: 20px; font-weight: 800; letter-spacing: 4.100px; color: #94a3b8; }
.sidebar nav { display: flex; flex-direction: column; gap: 11px; padding: 0 27px 0 29px; height: 1078px; }
.sidebar nav a { height: 97px; flex: none; display: flex; align-items: center; gap: 37px; padding-left: 39px; border-radius: 29px; font-size: 24.600px; font-weight: 650; letter-spacing: -.25px; color: #64748b; white-space: nowrap; }
.sidebar nav a.active { position: relative; gap: 25px; padding-left: 26px; background: linear-gradient(90deg, #e4eefe, #ecf2fe 10%); color: #3f82fc; box-shadow: 0 2px 4px rgba(0,0,0,.14); }
.sidebar nav a.active::before { content: ""; position: absolute; left: 0; top: 27px; width: 11px; height: 43px; border-radius: 0 11px 11px 0; background: #3f82fc; }
.ibox { width: 60px; height: 60px; border-radius: 50%; background: #c9dbfe; display: flex; align-items: center; justify-content: center; }
.ibox .ic { width: 40px; height: 40px; stroke-width: 2.200; }
.side-foot { height: 144px; padding: 57px 26px 0 29px; border-top: 2px solid #f4f4f6; }
.version { border-top: 1px solid #f6f6f8; padding: 33px 29px 0; display: flex; justify-content: space-between; font-size: 19px; line-height: 24px; font-weight: 700; letter-spacing: 4px; color: #cfd4dd; }
.version i { width: 11px; height: 11px; margin-top: 4px; border-radius: 50%; background: #b9e6bd; }

main { position: relative; flex: 1; padding: 56px 58px 0; background: #fefefe; overflow: hidden; }
main::after { content: ""; position: absolute; left: 0; right: 1400px; bottom: 0; height: 90px; background: linear-gradient(rgba(0,0,0,0), rgba(0,0,0,.1)); -webkit-mask-image: linear-gradient(90deg, #000 80%, transparent); mask-image: linear-gradient(90deg, #000 80%, transparent); }
.hero { display: flex; justify-content: space-between; align-items: flex-end; height: 159px; }
.date { display: flex; align-items: center; gap: 15px; height: 38px; font-size: 25px; font-weight: 600; letter-spacing: 2.900px; color: #64748b; white-space: nowrap; }
.date i { width: 14px; height: 14px; border-radius: 50%; background: #84d68f; }
h1 { margin: 27px 0 10px; font-size: 84px; line-height: 84px; font-weight: 880; letter-spacing: -3.100px; word-spacing: 1px; color: #0f172a; white-space: nowrap; }
h1 span { color: #3f82fc; }
.create { width: 291px; height: 79px; border: 0; border-radius: 40px; background: #3f82fc; color: #fff; font: 600 28.8px Inter, sans-serif; display: flex; align-items: center; justify-content: center; gap: 28px; box-shadow: 0 18px 36px rgba(63,130,252,.26); white-space: nowrap; }
.create .ic { width: 30px; height: 30px; }

.stats { display: grid; grid-template-columns: repeat(3, 1fr); gap: 44px; margin-top: 72px; height: 354px; }
.stat { position: relative; border: 2px solid #f5f7fa; padding: 57px 57px 0; border-radius: 57px; background: #fff; box-shadow: 0 18px 45px rgba(120,150,190,.1), 0 6px 14px rgba(120,150,190,.07); }
.tile { display: flex; align-items: center; justify-content: center; color: #fff; }
.blue { background: linear-gradient(135deg, #3f86ff, #4a3fe8); }
.violet { background: linear-gradient(135deg, #8a5cfb, #8f2eee); }
.teal { background: linear-gradient(135deg, #43b883, #339088); }
.stat .tile { width: 93px; height: 93px; border-radius: 29px; box-shadow: 0 16px 28px rgba(0,0,0,.11), 0 5px 10px rgba(0,0,0,.07); }
.stat .tile .ic { width: 44px; height: 44px; stroke-width: 2; }
.stat h3 { margin-top: 31px; font-size: 25px; line-height: 32px; font-weight: 600; letter-spacing: 2.650px; color: #64748b; white-space: nowrap; }
.stat strong { display: block; margin-top: 11px; font-size: 63px; line-height: 70px; font-weight: 870; letter-spacing: .9px; font-variant-numeric: tabular-nums; color: #0f172a; }
.stat strong.wide { margin-left: 2px; }
.hovered { transform: translateY(-7px); box-shadow: 0 24px 70px rgba(120,150,190,.13); }
.hovered .tile { transform: scale(1.1); }
.more { position: absolute; right: 58px; top: 58px; color: #cbd5e1; stroke-width: 2; }

.lower { display: flex; gap: 58px; margin-top: 73px; height: 567px; }
.quick { width: 710px; display: flex; flex-direction: column; gap: 30px; flex: none; }
.quick h2 { height: 50px; margin-bottom: 13px; display: flex; align-items: center; gap: 15px; font-size: 36px; font-weight: 800; letter-spacing: 1.800px; color: #0f172a; white-space: nowrap; }
.quick h2 .ic { width: 36px; height: 36px; color: #f59e0b; stroke-width: 2; }
.quick a { height: 138px; display: flex; align-items: center; gap: 29px; padding-left: 28px; border: 2px solid #f5f7fa; border-radius: 42px; background: #fff; font-size: 25.4px; font-weight: 620; color: #334155; box-shadow: 0 12px 26px rgba(120,150,190,.12); }
.quick .tile { width: 79px; height: 79px; border-radius: 28px; box-shadow: 0 8px 14px rgba(0,0,0,.13); }
.quick .tile .ic { width: 36px; height: 36px; stroke-width: 2; }

.promos { flex: 1; display: grid; grid-template-columns: 718px 717px; gap: 43px; }
.promo { position: relative; padding: 57px 57px; border-radius: 56px; color: #fff; box-shadow: 0 45px 90px -12px rgba(0,0,0,.27); }
.convert { background: radial-gradient(circle at 640px 90px, rgba(255,255,255,.13), rgba(255,255,255,0) 270px), radial-gradient(circle at 40px 600px, rgba(60,70,90,.24), rgba(60,70,90,0) 260px), linear-gradient(135deg, #5f66fb, #8f2dee); }
.generate { background: radial-gradient(circle at 640px 90px, rgba(255,255,255,.12), rgba(255,255,255,0) 270px), radial-gradient(circle at 40px 600px, rgba(30,60,60,.24), rgba(30,60,60,0) 260px), linear-gradient(135deg, #43bb82, #33918a); }
.badge { display: inline-flex; align-items: center; gap: 14px; height: 46px; padding: 0 21px; border: 2px solid rgba(255,255,255,.17); border-radius: 23px; background: rgba(255,255,255,.11); font-size: 21.3px; font-weight: 700; letter-spacing: 2.550px; white-space: nowrap; }
.badge .ic { width: 22px; height: 22px; }
.promo h3 { margin-top: 30px; font-size: 42.800px; line-height: 56px; font-weight: 860; letter-spacing: -.1px; white-space: nowrap; }
.promo p { margin-top: 14px; font-size: 25.100px; line-height: 36px; color: rgba(255,255,255,.84); white-space: nowrap; }
.next { position: absolute; right: 58px; bottom: 57px; width: 72px; height: 72px; border-radius: 50%; background: rgba(255,255,255,.2); display: flex; align-items: center; justify-content: center; }
.next .ic { stroke-width: 2; }

.linkhint { position: absolute; left: 0; bottom: 0; width: 558px; height: 42px; padding-left: 10px; border: 1px solid #a8b2c8; border-width: 1px 1px 0 0; border-radius: 0 10px 0 20px; background: linear-gradient(100deg, #d6e2fb 80%, #bccae5); box-shadow: 0 0 30px rgba(0,0,0,.2); font-size: 23.900px; line-height: 41px; color: #474747; white-space: nowrap; }

/* dock */
.dock { position: absolute; left: 433px; bottom: 10px; width: 2014px; height: 128px; padding: 16px 16px 0; border: 2px solid rgba(255,255,255,.2); border-radius: 36px; display: flex; gap: 26px; background: linear-gradient(90deg, #5d5a56, #6c5f55 20%, #7b6353 28%, #64695c 38%, #616a5b 60%, #6d6a67 74%, #6a7566 83%, #7a7465 92%, #8a7864); }
.app { position: relative; width: 80px; height: 80px; flex: none; }
.app svg { width: 80px; height: 80px; filter: drop-shadow(0 2px 2px rgba(0,0,0,.25)); }
.app.on::after { content: ""; position: absolute; left: 35px; bottom: -26px; width: 8px; height: 8px; border-radius: 50%; background: #000; }
.petals rect { mix-blend-mode: multiply; }
.cal { border-radius: 18px; overflow: hidden; background: #fbfbfb; text-align: center; display: flex; flex-direction: column; }
.cal span { height: 25px; background: #ea5b52; color: #fff; font-size: 16px; line-height: 27px; font-weight: 700; letter-spacing: -.3px; white-space: nowrap; }
.cal b { font-size: 49px; line-height: 50px; font-weight: 350; letter-spacing: -2px; color: #2b2b2b; }
.count { position: absolute; right: -15px; top: -10px; width: 39px; height: 39px; border-radius: 50%; background: #e54d40; color: #fff; font-size: 22px; line-height: 39px; text-align: center; box-shadow: 0 2px 5px rgba(0,0,0,.3); }
.sep { width: 2px; height: 97px; margin: -3px 9px 0 11px; background: #41463c; flex: none; }
.sep.second { margin: -3px 6px 0 11px; }
.folder { width: 90px; margin-left: -2px; }
.folder svg { width: 90px; height: 78px; margin-top: 4px; }
.trash { width: 72px; }
.trash svg { width: 70px; height: 92px; margin-top: -6px; }
```
